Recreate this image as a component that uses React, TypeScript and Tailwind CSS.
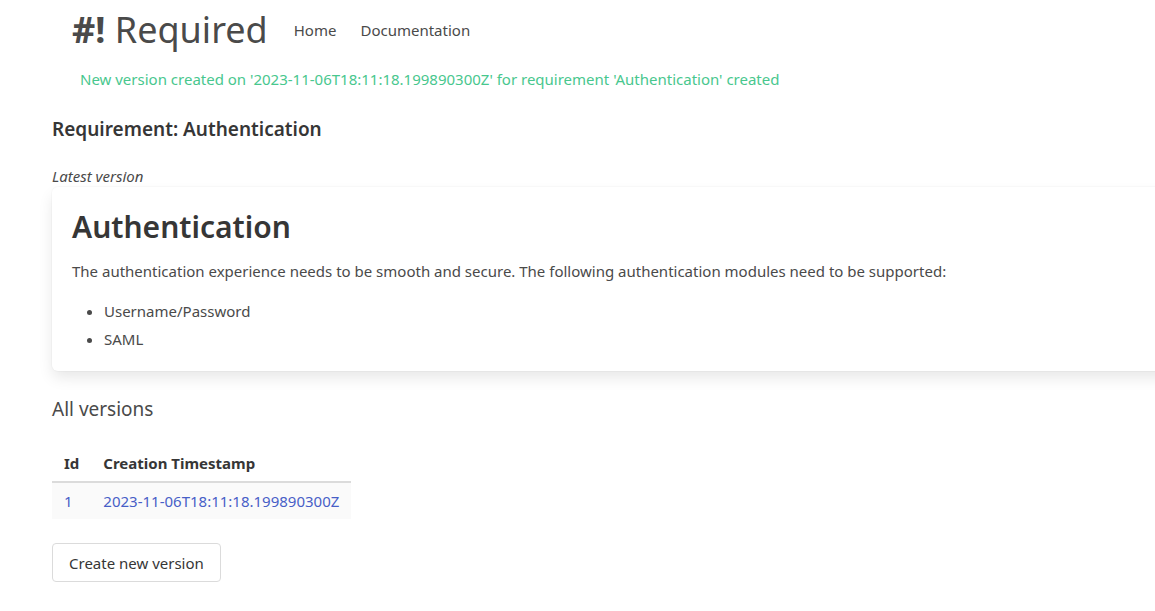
export default function App() {
  return (
    <div className="min-h-screen w-full overflow-x-hidden bg-white text-[15px] leading-6 text-[#4a4a4a] [font-family:'Noto_Sans',Roboto,sans-serif]">
      {/* Navbar */}
      <nav className="flex h-[60px] items-center pl-[72px]">
        <a className="text-[36px] leading-none text-[#4a4a4a]">
          <span className="font-bold">#!</span> Required
        </a>
        <div className="ml-[14px] flex items-center">
          <a className="px-3 text-[#4a4a4a]">Home</a>
          <a className="px-3 text-[#4a4a4a]">Documentation</a>
        </div>
      </nav>

      {/* Notification */}
      <p className="mt-[7px] pl-[80px] text-[#48c78e]">
        New version created on '2023-11-06T18:11:18.199890300Z' for requirement 'Authentication' created
      </p>

      <main className="px-[52px]">
        <h2 className="mt-[23px] text-[19px] leading-[30px] font-semibold text-[#363636]">
          Requirement: Authentication
        </h2>

        <p className="mt-[21px] leading-[22px] italic">Latest version</p>

        {/* Latest version box */}
        <div className="w-[1200px] rounded-md bg-white p-5 text-[#4a4a4a] shadow-[0_0.5em_1em_-0.125em_rgba(10,10,10,0.1),0_0_0_1px_rgba(10,10,10,0.02)]">
          <h1 className="text-[30px] leading-[40px] font-semibold text-[#363636]">Authentication</h1>
          <p className="mt-3">
            The authentication experience needs to be smooth and secure. The following authentication modules need to be supported:
          </p>
          <ul className="mt-4 ml-8 list-disc">
            <li>Username/Password</li>
            <li className="mt-1">SAML</li>
          </ul>
        </div>

        <h3 className="mt-[23px] text-[19px] leading-[30px] text-[#4a4a4a]">All versions</h3>

        <table className="mt-[21px] text-left">
          <thead>
            <tr className="border-b-2 border-[#dbdbdb]">
              <th className="px-3 py-[6px] font-bold text-[#363636]">Id</th>
              <th className="px-3 py-[6px] font-bold text-[#363636]">Creation Timestamp</th>
            </tr>
          </thead>
          <tbody>
            <tr className="h-[37px] bg-[#fafafa]">
              <td className="px-3 py-[6px]">
                <a className="text-[#485fc7]">1</a>
              </td>
              <td className="px-3 py-[6px]">
                <a className="text-[#485fc7]">2023-11-06T18:11:18.199890300Z</a>
              </td>
            </tr>
          </tbody>
        </table>

        <button className="mt-6 h-[39px] rounded border border-[#dbdbdb] bg-white px-4 text-[#363636]">
          Create new version
        </button>
      </main>
    </div>
  );
}
